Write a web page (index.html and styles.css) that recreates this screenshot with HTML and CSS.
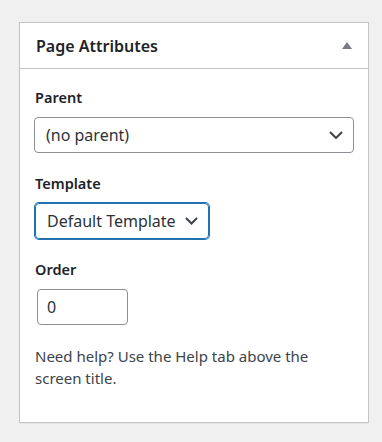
FILE: index.html
```html
<!DOCTYPE html>
<html lang="en">
<head>
    <meta charset="UTF-8">
    <meta name="viewport" content="width=device-width, initial-scale=1.0">
    <title>Page Attributes</title>
    <link rel="stylesheet" href="styles.css">
</head>
<body>
    <div class="postbox">
        <div class="postbox-header">
            <h2>Page Attributes</h2>
            <svg class="toggle" width="10" height="7" viewBox="0 0 10 7"><polygon points="5,0 10,7 0,7" fill="#787c82"/></svg>
        </div>
        <div class="inside">
            <div class="field">
                <label>Parent</label>
                <div class="select select-wide">
                    <span>(no parent)</span>
                    <svg class="chevron" width="14" height="8" viewBox="0 0 14 8"><polyline points="1,1 7,7 13,1" fill="none" stroke="#3c434a" stroke-width="2"/></svg>
                </div>
            </div>
            <div class="field">
                <label>Template</label>
                <div class="select select-focus">
                    <span>Default Template</span>
                    <svg class="chevron" width="13" height="8" viewBox="0 0 13 8"><polyline points="1,1 6.5,6.5 12,1" fill="none" stroke="#3c434a" stroke-width="2"/></svg>
                </div>
            </div>
            <div class="field">
                <label>Order</label>
                <div class="input">0</div>
            </div>
            <p class="help">Need help? Use the Help tab above the screen title.</p>
        </div>
    </div>
</body>
</html>
```

FILE: styles.css
```css
body {
    font-family: "Noto Sans", "Open Sans", sans-serif;
    margin: 0;
    padding: 22px 14px 20px 19px;
    background: #f0f0f1;
    color: #1d2327;
}
.postbox {
    width: 348px;
    background: #fff;
    border: 1px solid #c3c4c7;
    box-shadow: 0 1px 1px rgba(0,0,0,0.04);
}
.postbox-header {
    height: 45px;
    display: flex;
    align-items: center;
    justify-content: space-between;
    padding: 0 16px 0 16px;
    border-bottom: 1px solid #c3c4c7;
}
.postbox-header h2 {
    margin: 0;
    font-size: 16px;
    font-weight: 600;
    line-height: 22px;
    color: #1d2327;
}
.toggle {
    margin-top: -1px;
}
.inside {
    padding: 18px 14px 33px 14px;
    display: flex;
    flex-direction: column;
    gap: 20px;
}
.field {
    display: flex;
    flex-direction: column;
    align-items: flex-start;
    gap: 9px;
}
.field label {
    font-size: 14.5px;
    font-weight: 600;
    line-height: 21px;
    color: #1d2327;
    padding-left: 1px;
}
.select {
    box-sizing: border-box;
    height: 36px;
    display: flex;
    align-items: center;
    justify-content: space-between;
    padding: 0 10px 0 11px;
    border: 1px solid #8c8f94;
    border-radius: 4px;
    font-size: 16px;
    color: #2c3338;
}
.select-wide {
    width: 100%;
}
.select-focus {
    width: 174px;
    margin-left: 1px;
    border-color: #2271b1;
    box-shadow: 0 0 0 1px #2271b1;
}
.chevron {
    flex: none;
}
.input {
    box-sizing: border-box;
    width: 91px;
    height: 36px;
    margin-left: 3px;
    padding: 0 9px;
    display: flex;
    align-items: center;
    border: 1px solid #8c8f94;
    border-radius: 4px;
    font-size: 16px;
    color: #2c3338;
}
.help {
    margin: 0;
    font-size: 15px;
    line-height: 22px;
    color: #3c434a;
    padding-left: 1px;
}
```
